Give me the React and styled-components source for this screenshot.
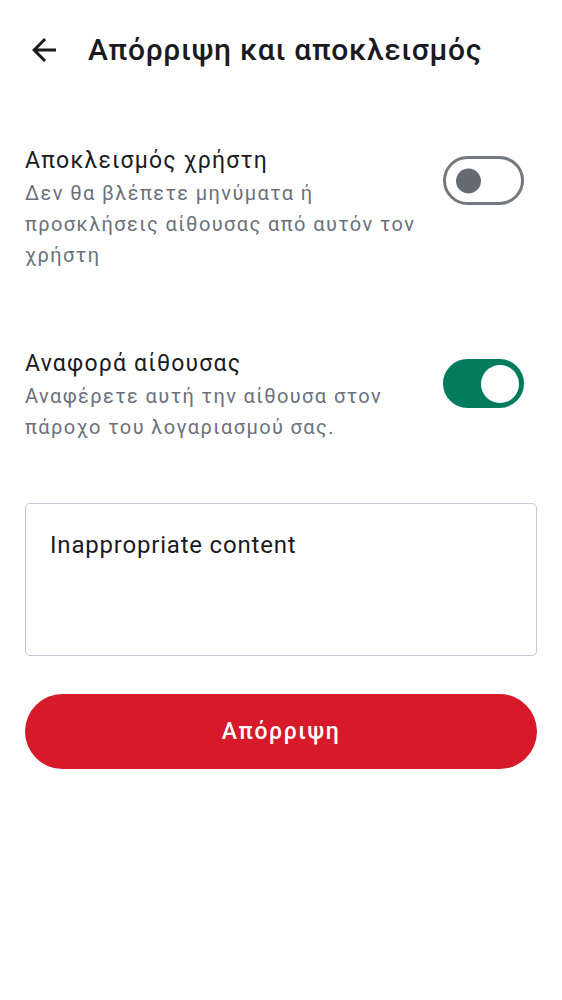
import React, { useState } from "react";
import styled, { createGlobalStyle } from "styled-components";

const GlobalStyle = createGlobalStyle`
  body {
    margin: 0;
    background: #ffffff;
    font-family: Roboto, "Noto Sans", sans-serif;
  }
`;

const Page = styled.div`
  width: 562px;
  min-height: 1000px;
  background: #ffffff;
`;

const Header = styled.header`
  display: flex;
  align-items: center;
  height: 100px;
  padding-left: 26px;
  gap: 26px;
`;

const BackButton = styled.button`
  display: flex;
  align-items: center;
  justify-content: center;
  width: 36px;
  height: 36px;
  padding: 0;
  border: none;
  background: none;
  color: #1b1b1f;
`;

const Title = styled.h1`
  margin: 0;
  font-size: 30px;
  line-height: 36px;
  font-weight: 500;
  letter-spacing: 0.7px;
  color: #1b1b1f;
`;

const Content = styled.div`
  display: flex;
  flex-direction: column;
  padding: 44px 25px 0;
`;

const Row = styled.div`
  display: flex;
  align-items: flex-start;
  gap: 18px;
  margin-bottom: ${(p) => p.$spacing}px;
`;

const RowText = styled.div`
  flex: 1;
  display: flex;
  flex-direction: column;
`;

const RowTitle = styled.div`
  font-size: 23px;
  line-height: 34px;
  letter-spacing: 1.2px;
  color: #1b1b1f;
`;

const RowDesc = styled.div`
  font-size: 20px;
  line-height: 31px;
  letter-spacing: 1.4px;
  color: #6b717b;
`;

const Toggle = styled.button`
  position: relative;
  flex: none;
  width: 81px;
  height: 49px;
  margin: 12px 13px 0 0;
  padding: 0;
  border-radius: 25px;
  box-sizing: border-box;
  border: 3px solid ${(p) => (p.$on ? "#037b5f" : "#747880")};
  background: ${(p) => (p.$on ? "#037b5f" : "#ffffff")};
  cursor: pointer;
`;

const Thumb = styled.span`
  position: absolute;
  top: 50%;
  border-radius: 50%;
  transform: translateY(-50%);
  width: ${(p) => (p.$on ? 38 : 25)}px;
  height: ${(p) => (p.$on ? 38 : 25)}px;
  left: ${(p) => (p.$on ? 35 : 10)}px;
  background: ${(p) => (p.$on ? "#ffffff" : "#646b75")};
`;

const ReasonBox = styled.textarea`
  display: block;
  box-sizing: border-box;
  width: 512px;
  height: 153px;
  padding: 26px 24px;
  border: 1.5px solid #c5c9d1;
  border-radius: 5px;
  font-family: Roboto, "Noto Sans", sans-serif;
  font-size: 24px;
  line-height: 30px;
  letter-spacing: 0.8px;
  color: #1b1b1f;
  resize: none;
  outline: none;
`;

const RejectButton = styled.button`
  width: 512px;
  height: 75px;
  margin-top: 38px;
  border: none;
  border-radius: 38px;
  background: #d61a2a;
  color: #ffffff;
  font-family: Roboto, "Noto Sans", sans-serif;
  font-size: 23px;
  font-weight: 500;
  letter-spacing: 1.6px;
  cursor: pointer;
`;

const BackArrow = () => (
  <svg width="36" height="36" viewBox="0 0 24 24" fill="currentColor">
    <path d="M20 11H7.83l5.59-5.59L12 4l-8 8 8 8 1.41-1.41L7.83 13H20v-2z" />
  </svg>
);

const Switch = ({ on, onChange }) => (
  <Toggle $on={on} onClick={() => onChange(!on)} aria-pressed={on}>
    <Thumb $on={on} />
  </Toggle>
);

export default function App() {
  const [block, setBlock] = useState(false);
  const [report, setReport] = useState(true);
  const [reason, setReason] = useState("Inappropriate content");

  return (
    <Page>
      <GlobalStyle />
      <Header>
        <BackButton aria-label="back">
          <BackArrow />
        </BackButton>
        <Title>Απόρριψη και αποκλεισμός</Title>
      </Header>
      <Content>
        <Row $spacing={76}>
          <RowText>
            <RowTitle>Αποκλεισμός χρήστη</RowTitle>
            <RowDesc>
              Δεν θα βλέπετε μηνύματα ή προσκλήσεις αίθουσας από αυτόν τον
              χρήστη
            </RowDesc>
          </RowText>
          <Switch on={block} onChange={setBlock} />
        </Row>
        <Row $spacing={60}>
          <RowText>
            <RowTitle>Αναφορά αίθουσας</RowTitle>
            <RowDesc>
              Αναφέρετε αυτή την αίθουσα στον πάροχο του λογαριασμού σας.
            </RowDesc>
          </RowText>
          <Switch on={report} onChange={setReport} />
        </Row>
        <ReasonBox value={reason} onChange={(e) => setReason(e.target.value)} />
        <RejectButton>Απόρριψη</RejectButton>
      </Content>
    </Page>
  );
}
